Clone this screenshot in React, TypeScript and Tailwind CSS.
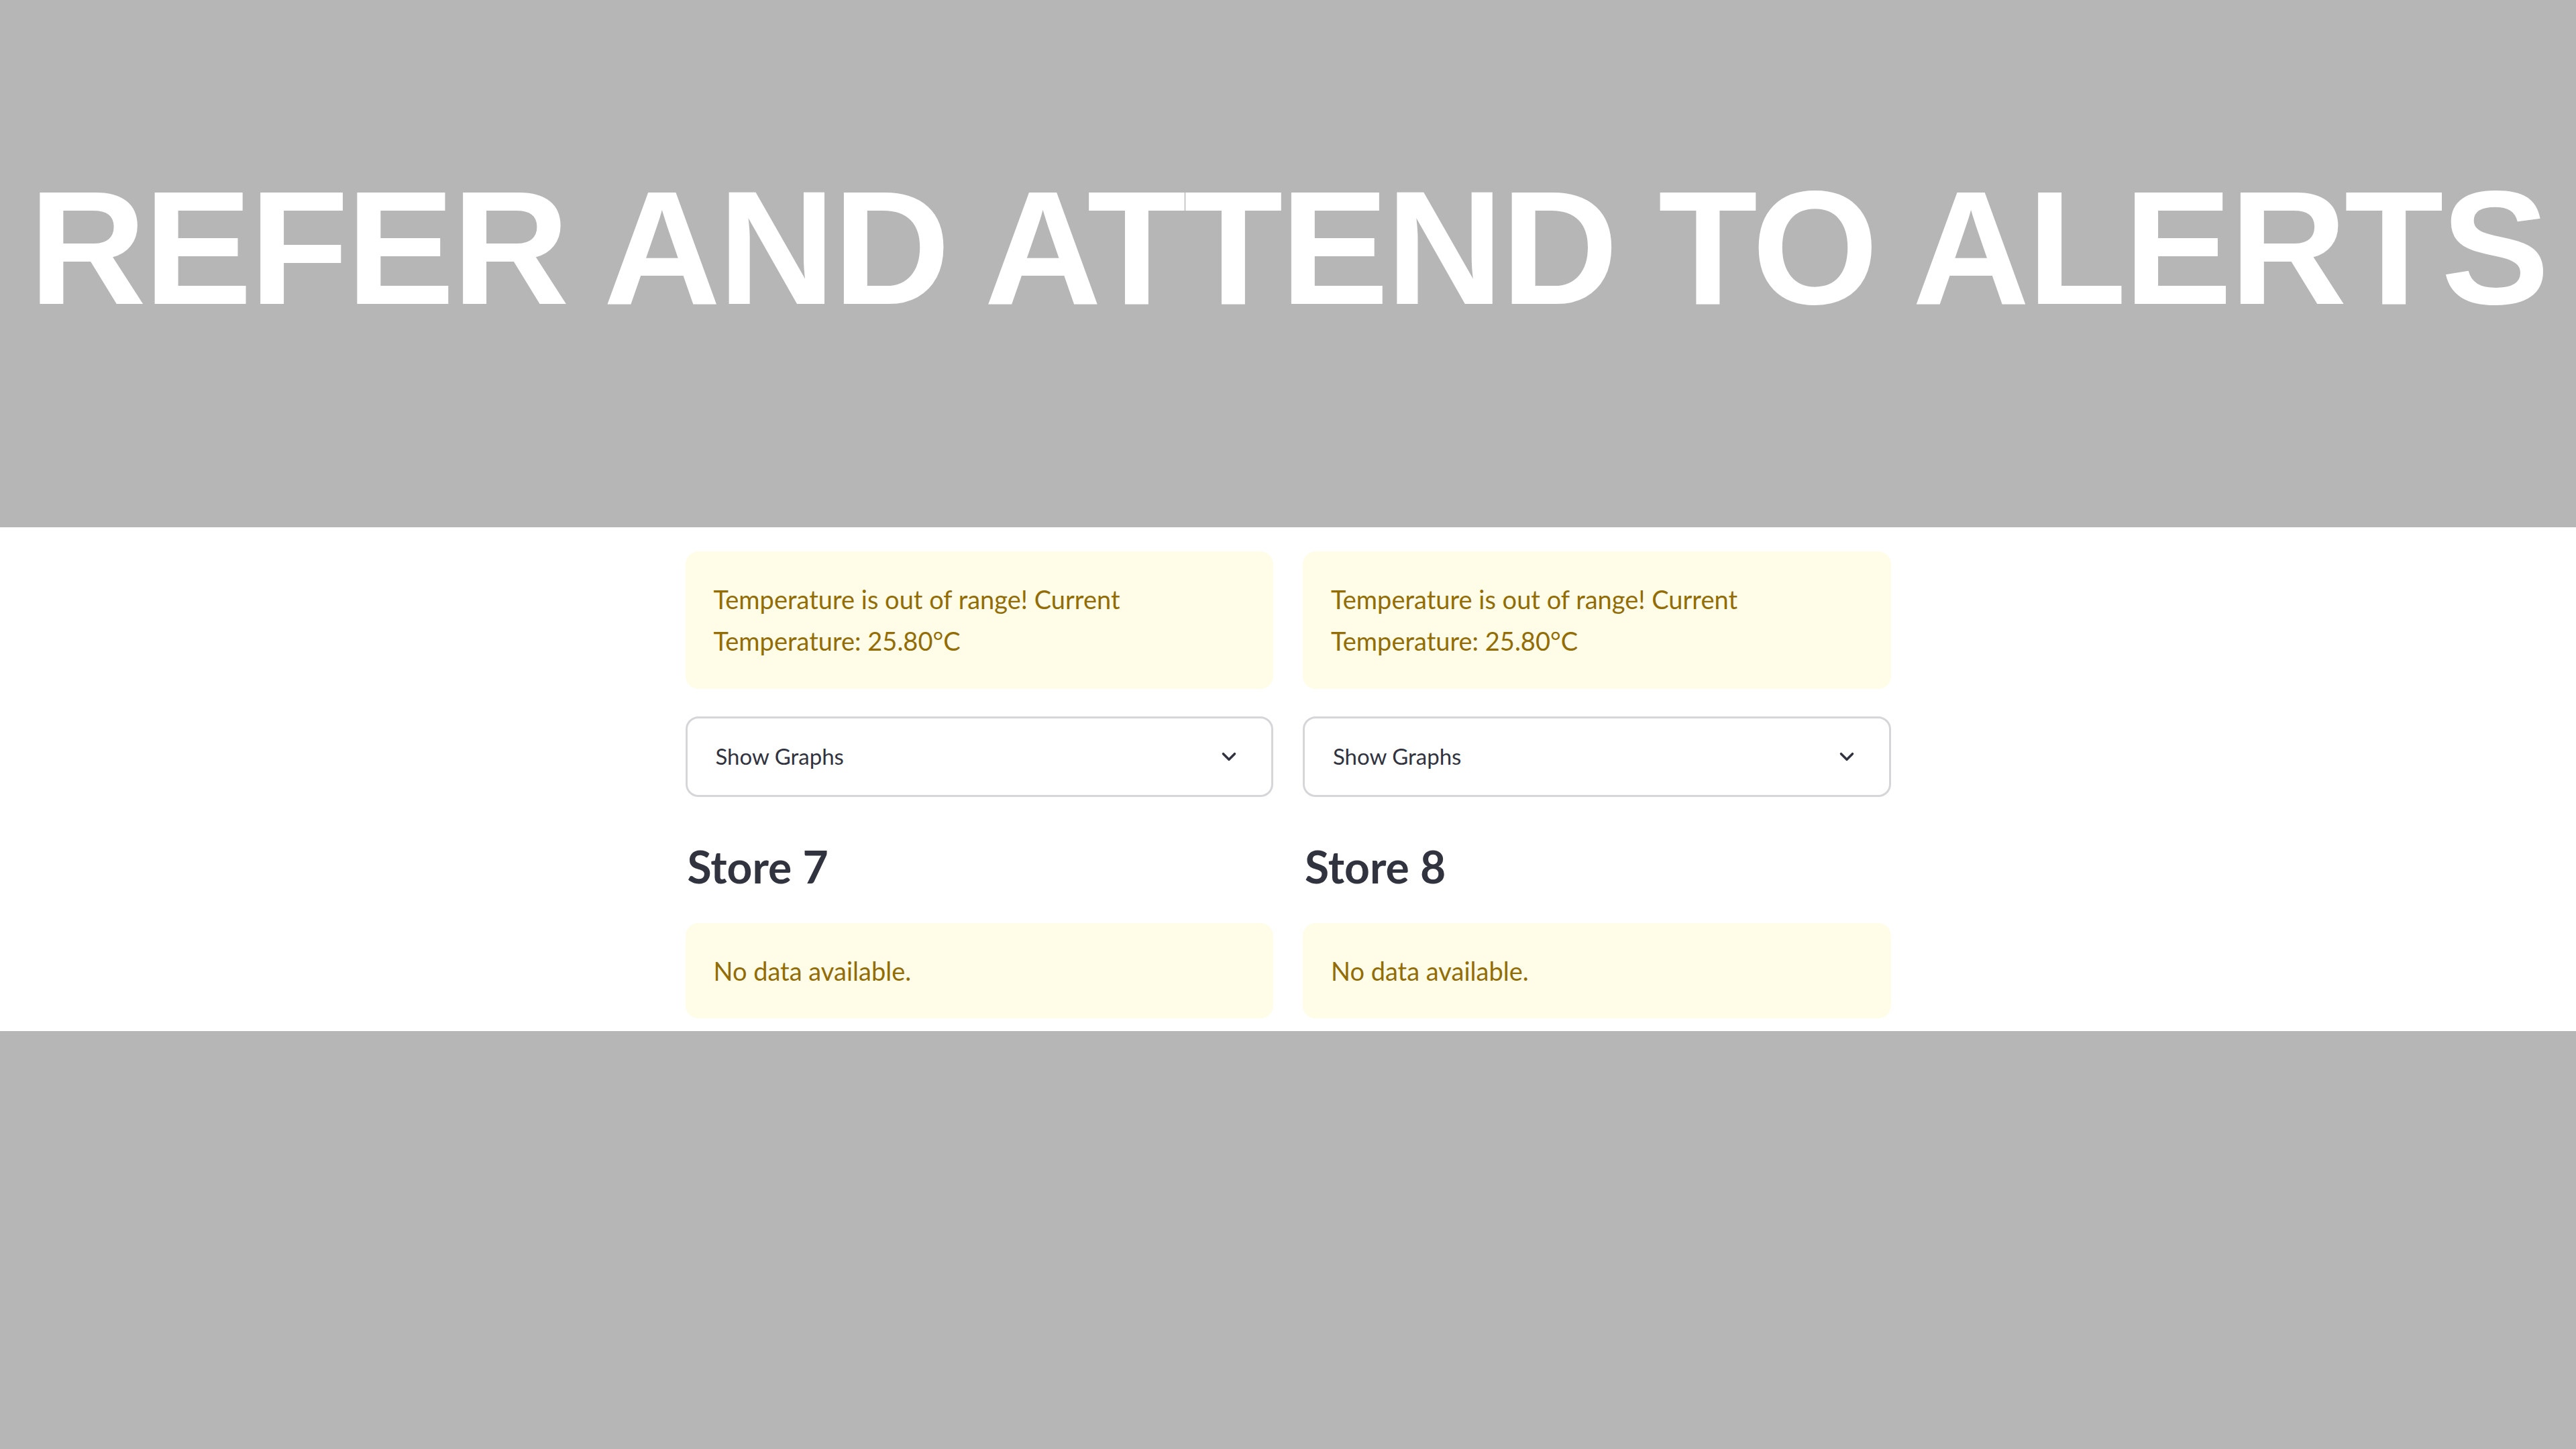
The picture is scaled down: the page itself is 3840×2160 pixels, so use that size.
import { ChevronDown } from 'lucide-react';

const alertText = "text-[38px] leading-[62px] text-[#926c05]";

function Alert({ children, className = '' }: { children: React.ReactNode; className?: string }) {
  return (
    <div className={`rounded-[19px] bg-[#fffce7] px-[42px] py-[40px] ${alertText} ${className}`}>
      {children}
    </div>
  );
}

function Expander({ label }: { label: string }) {
  return (
    <div className="mt-[41px] flex h-[120px] items-center justify-between rounded-[19px] border-[3px] border-[#d6d6d9] bg-white pl-[42px] pr-[46px] text-[33px] text-[#31333f]">
      <span>{label}</span>
      <ChevronDown className="h-[34px] w-[34px]" strokeWidth={2.5} />
    </div>
  );
}

function StoreColumn({ store }: { store: number }) {
  return (
    <div className="flex flex-col">
      <Alert className="h-[205px]">
        Temperature is out of range! Current
        <br />
        Temperature: 25.80°C
      </Alert>
      <Expander label="Show Graphs" />
      {/* store heading */}
      <h3 className="mt-[71px] pl-[3px] text-[66px] font-bold leading-none text-[#31333f]">Store {store}</h3>
      <Alert className="mt-[51px] h-[142px]">No data available.</Alert>
    </div>
  );
}

export default function App() {
  return (
    <div
      className="flex h-[2160px] w-[3840px] flex-col bg-[#b6b6b6]"
      style={{ fontFamily: 'Lato, "Noto Sans", sans-serif' }}
    >
      <div className="h-[786px] pt-[248px]">
        <h1
          className="text-center text-[242px] font-bold leading-none tracking-[-3.7px] text-white"
          style={{ fontFamily: '"Liberation Sans", Arial, sans-serif' }}
        >
          REFER AND ATTEND TO ALERTS
        </h1>
      </div>
      <div className="h-[751px] bg-white pt-[36px]">
        <div className="mx-auto grid w-[1797px] grid-cols-2 gap-x-[44px]">
          <StoreColumn store={7} />
          <StoreColumn store={8} />
        </div>
      </div>
    </div>
  );
}
